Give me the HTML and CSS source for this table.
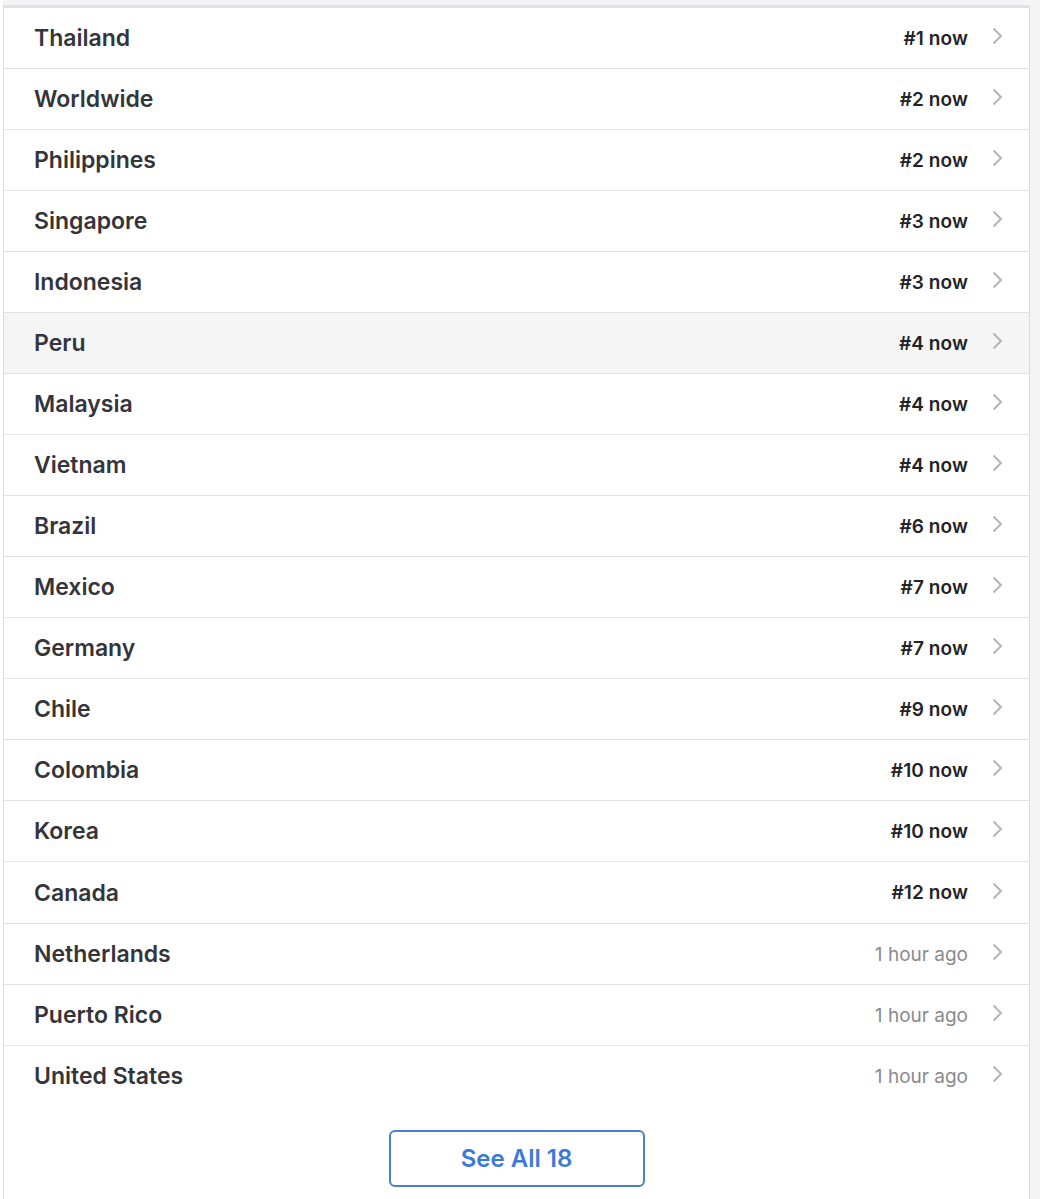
FILE: index.html
```html
<!DOCTYPE html>
<html>
<head>
<meta charset="utf-8">
<link rel="stylesheet" href="styles.css">
</head>
<body>
<div class="page">
  <div class="topband"></div>
  <div class="card">
    <ul class="list">
      <li class="row"><span class="name">Thailand</span><span class="rank">#1 now</span><svg class="chev" viewBox="0 0 11 18"><path d="M1.5 1.5l7.5 7.5-7.5 7.5"/></svg></li>
      <li class="row"><span class="name">Worldwide</span><span class="rank">#2 now</span><svg class="chev" viewBox="0 0 11 18"><path d="M1.5 1.5l7.5 7.5-7.5 7.5"/></svg></li>
      <li class="row"><span class="name">Philippines</span><span class="rank">#2 now</span><svg class="chev" viewBox="0 0 11 18"><path d="M1.5 1.5l7.5 7.5-7.5 7.5"/></svg></li>
      <li class="row"><span class="name">Singapore</span><span class="rank">#3 now</span><svg class="chev" viewBox="0 0 11 18"><path d="M1.5 1.5l7.5 7.5-7.5 7.5"/></svg></li>
      <li class="row"><span class="name">Indonesia</span><span class="rank">#3 now</span><svg class="chev" viewBox="0 0 11 18"><path d="M1.5 1.5l7.5 7.5-7.5 7.5"/></svg></li>
      <li class="row active"><span class="name">Peru</span><span class="rank">#4 now</span><svg class="chev" viewBox="0 0 11 18"><path d="M1.5 1.5l7.5 7.5-7.5 7.5"/></svg></li>
      <li class="row"><span class="name">Malaysia</span><span class="rank">#4 now</span><svg class="chev" viewBox="0 0 11 18"><path d="M1.5 1.5l7.5 7.5-7.5 7.5"/></svg></li>
      <li class="row"><span class="name">Vietnam</span><span class="rank">#4 now</span><svg class="chev" viewBox="0 0 11 18"><path d="M1.5 1.5l7.5 7.5-7.5 7.5"/></svg></li>
      <li class="row"><span class="name">Brazil</span><span class="rank">#6 now</span><svg class="chev" viewBox="0 0 11 18"><path d="M1.5 1.5l7.5 7.5-7.5 7.5"/></svg></li>
      <li class="row"><span class="name">Mexico</span><span class="rank">#7 now</span><svg class="chev" viewBox="0 0 11 18"><path d="M1.5 1.5l7.5 7.5-7.5 7.5"/></svg></li>
      <li class="row"><span class="name">Germany</span><span class="rank">#7 now</span><svg class="chev" viewBox="0 0 11 18"><path d="M1.5 1.5l7.5 7.5-7.5 7.5"/></svg></li>
      <li class="row"><span class="name">Chile</span><span class="rank">#9 now</span><svg class="chev" viewBox="0 0 11 18"><path d="M1.5 1.5l7.5 7.5-7.5 7.5"/></svg></li>
      <li class="row"><span class="name">Colombia</span><span class="rank">#10 now</span><svg class="chev" viewBox="0 0 11 18"><path d="M1.5 1.5l7.5 7.5-7.5 7.5"/></svg></li>
      <li class="row"><span class="name">Korea</span><span class="rank">#10 now</span><svg class="chev" viewBox="0 0 11 18"><path d="M1.5 1.5l7.5 7.5-7.5 7.5"/></svg></li>
      <li class="row"><span class="name">Canada</span><span class="rank">#12 now</span><svg class="chev" viewBox="0 0 11 18"><path d="M1.5 1.5l7.5 7.5-7.5 7.5"/></svg></li>
      <li class="row"><span class="name">Netherlands</span><span class="ago">1 hour ago</span><svg class="chev" viewBox="0 0 11 18"><path d="M1.5 1.5l7.5 7.5-7.5 7.5"/></svg></li>
      <li class="row"><span class="name">Puerto Rico</span><span class="ago">1 hour ago</span><svg class="chev" viewBox="0 0 11 18"><path d="M1.5 1.5l7.5 7.5-7.5 7.5"/></svg></li>
      <li class="row last"><span class="name">United States</span><span class="ago">1 hour ago</span><svg class="chev" viewBox="0 0 11 18"><path d="M1.5 1.5l7.5 7.5-7.5 7.5"/></svg></li>
    </ul>
    <div class="footer">
      <button class="seeall">See All 18</button>
    </div>
  </div>
</div>
</body>
</html>
```

FILE: styles.css
```css
html, body {
  margin: 0;
  padding: 0;
  background: #ffffff;
  font-family: Inter, "Noto Sans", "Liberation Sans", sans-serif;
}
.page {
  width: 1040px;
  background: linear-gradient(to right, #ffffff 0, #ffffff 3px, #f4f4f5 3px);
}
.topband {
  height: 5px;
  background: #f4f4f5;
  border-bottom: 3px solid #e0e0e7;
  margin-left: 3px;
  width: 1027px;
}
.card {
  margin-left: 3px;
  width: 1025px;
  background: #ffffff;
  border-left: 1px solid #dcdcdc;
  border-right: 1px solid #dcdcdc;
  padding-bottom: 40px;
}
.list {
  list-style: none;
  margin: 0;
  padding: 0;
}
.row {
  display: flex;
  align-items: center;
  height: 60px;
  border-bottom: 1px solid #e2e2e4;
  padding-left: 30px;
  padding-right: 26px;
}
.row:nth-child(15) {
  height: 61px;
}
.row.last {
  border-bottom: none;
}
.row.active {
  background: #f5f5f6;
}
.name {
  flex: 1;
  font-size: 23px;
  font-weight: 600;
  color: #34353a;
  letter-spacing: 0;
}
.rank {
  font-size: 19px;
  font-weight: 600;
  color: #222326;
  letter-spacing: 0.1px;
}
.ago {
  font-size: 19px;
  font-weight: 400;
  color: #8a8a8e;
  letter-spacing: 0;
}
.chev {
  width: 11px;
  height: 18px;
  margin-left: 24px;
  margin-top: -4px;
  fill: none;
  stroke: #b5b5b8;
  stroke-width: 2;
}
.footer {
  display: flex;
  justify-content: center;
  padding-top: 24px;
}
.seeall {
  width: 256px;
  height: 57px;
  border: 2px solid #4a7fcf;
  border-radius: 6px;
  background: #ffffff;
  color: #3a7bd9;
  font-family: Inter, "Noto Sans", "Liberation Sans", sans-serif;
  font-size: 24px;
  font-weight: 600;
}
```
